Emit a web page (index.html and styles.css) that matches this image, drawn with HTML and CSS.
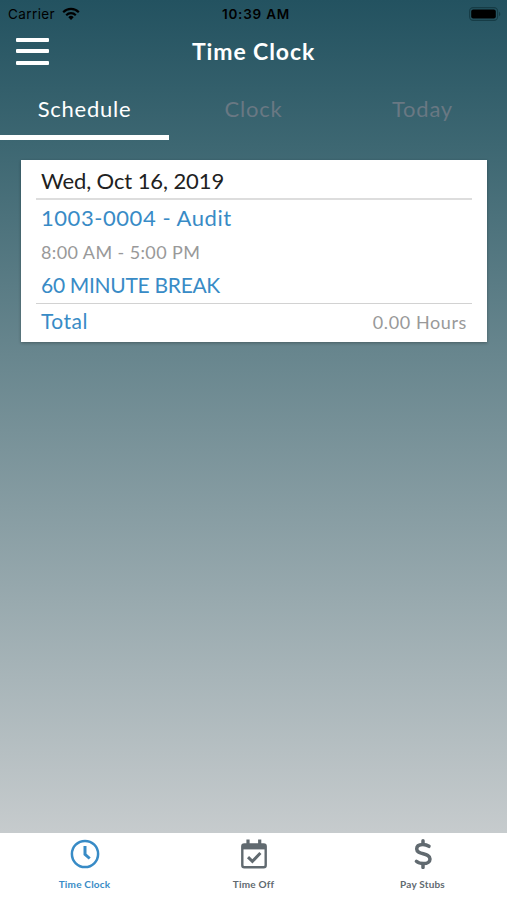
FILE: index.html
```html
<!DOCTYPE html>
<html lang="en">

<head>
    <meta charset="UTF-8">
    <meta name="viewport" content="width=device-width, initial-scale=1.0">
    <title>Time Clock</title>
    <link rel="stylesheet" href="styles.css">
</head>

<body>
    <div class="status-bar">
        <div class="carrier">
            <span>Carrier</span>
            <svg class="wifi" viewBox="0 0 18 13" fill="none" stroke="#000" stroke-width="2.2">
                <path d="M1.2 5.2a11 11 0 0 1 15.6 0" />
                <path d="M4.2 8.2a6.8 6.8 0 0 1 9.6 0" />
                <path d="M6.3 10.2a3.8 3.8 0 0 1 5.4 0L9 13z" fill="#000" stroke="none" />
            </svg>
        </div>
        <span class="time">10:39 AM</span>
        <svg class="battery" viewBox="0 0 32 14">
            <rect x="0.6" y="0.6" width="28" height="12.8" rx="3.6" fill="none" stroke="#163c46" stroke-width="1.1" />
            <rect x="2.2" y="2.4" width="24.6" height="9.2" rx="2" />
            <path d="M30 4.8c1.8.7 1.8 3.7 0 4.4z" fill="#163c46" />
        </svg>
    </div>

    <header class="header">
        <button class="menu" aria-label="Menu">
            <span></span>
            <span></span>
            <span></span>
        </button>
        <h1>Time Clock</h1>
    </header>

    <nav class="tabs">
        <div class="tab active">Schedule</div>
        <div class="tab">Clock</div>
        <div class="tab">Today</div>
    </nav>

    <main>
        <div class="card">
            <div class="card-date">Wed, Oct 16, 2019</div>
            <div class="card-shift">
                <div class="job">1003-0004 - Audit</div>
                <div class="hours">8:00 AM - 5:00 PM</div>
                <div class="break">60 MINUTE BREAK</div>
            </div>
            <div class="card-total">
                <span class="total-label">Total</span>
                <span class="total-hours">0.00 Hours</span>
            </div>
        </div>
    </main>

    <footer class="bottom-nav">
        <div class="nav-item active">
            <svg viewBox="0 0 30 30" fill="none" stroke="currentColor">
                <circle cx="15" cy="15" r="13.1" stroke-width="2.5" />
                <path d="M15 7v8.3l4.7 4.2" stroke-width="3" />
            </svg>
            <span>Time Clock</span>
        </div>
        <div class="nav-item">
            <svg viewBox="0 0 30 30" fill="none" stroke="currentColor">
                <rect x="3.3" y="5.5" width="23.4" height="22.8" rx="2" stroke-width="2.4" />
                <path d="M3.3 7.8h23.4" stroke-width="5.2" />
                <path d="M9 0.4v6M20.7 0.4v6" stroke-width="3.2" />
                <path d="M9 18.2l4.4 4.2 8-8.4" stroke-width="3" />
            </svg>
            <span>Time Off</span>
        </div>
        <div class="nav-item">
            <svg viewBox="0 0 30 30" fill="none" stroke="currentColor" stroke-width="3.5" stroke-linecap="round">
                <path d="M21 7.3c-1.8-1.2-3.8-1.8-6.1-1.8-4 0-6.2 1.7-6.2 4.4 0 6.2 13.3 3.5 13.3 10 0 2.9-2.6 4.7-6.5 4.7-2.8 0-5.3-.7-7.1-2.3" />
                <path d="M15 1.8v3.5M15 25v3.4" />
            </svg>
            <span>Pay Stubs</span>
        </div>
    </footer>
</body>

</html>
```

FILE: styles.css
```css
* {
    box-sizing: border-box;
}

body {
    display: flex;
    flex-direction: column;
    height: 100vh;
    margin: 0;
    font-family: Lato, "Open Sans", sans-serif;
    color: #212121;
    background: linear-gradient(#235260 0, #3d6772 145px, #68868e 355px, #c6cbcd 832px);
    white-space: nowrap;
    overflow: hidden;
}

.status-bar {
    display: grid;
    grid-template-columns: 1fr auto 1fr;
    align-items: center;
    height: 27px;
    padding: 0 6px 0 8px;
    font-family: Inter, "Liberation Sans", sans-serif;
    font-size: 13.5px;
    color: #000;
}

.carrier {
    display: flex;
    align-items: center;
    gap: 7px;
    letter-spacing: 0.4px;
}

.wifi {
    width: 18px;
    height: 13px;
}

.time {
    padding-left: 3px;
    font-weight: 600;
    letter-spacing: 0.8px;
}

.battery {
    justify-self: end;
    width: 32px;
    height: 14px;
}

.header {
    display: grid;
    grid-template-columns: 33px 1fr 33px;
    align-items: center;
    height: 48px;
    padding: 0 16px;
}

.menu {
    display: flex;
    flex-direction: column;
    gap: 7.5px;
    width: 33px;
    padding: 0;
    border: 0;
    background: none;
    cursor: pointer;
}

.menu span {
    height: 4px;
    border-radius: 1px;
    background-color: #fff;
}

h1 {
    margin: 0;
    padding-bottom: 1px;
    font-size: 23px;
    font-weight: 700;
    letter-spacing: 0.9px;
    text-align: center;
    color: #fff;
}

.tabs {
    display: grid;
    grid-template-columns: repeat(3, 1fr);
    height: 65px;
}

.tab {
    display: flex;
    justify-content: center;
    height: 65px;
    padding-top: 20px;
    border-bottom: 5px solid transparent;
    font-size: 22px;
    line-height: 27px;
    letter-spacing: 0.75px;
    color: #697883;
    cursor: pointer;
}

.tab.active {
    color: #fff;
    border-bottom-color: #fff;
}

main {
    flex: 1;
    padding: 20px 20px 0 21px;
}

.card {
    height: 182px;
    padding: 0 15px;
    background-color: #fff;
    box-shadow: 0 1px 3px rgba(0, 0, 0, 0.3);
}

.card-date {
    height: 40px;
    padding: 7px 5px 0;
    border-bottom: 2px solid #ddd;
    font-size: 22px;
    line-height: 28px;
    letter-spacing: -0.1px;
}

.card-shift {
    height: 104px;
    padding: 4px 5px 0;
    border-bottom: 1px solid #d2d2d2;
    color: #388bc6;
}

.job {
    font-size: 22px;
    line-height: 28px;
    letter-spacing: 0.55px;
}

.hours {
    padding-top: 3px;
    font-size: 18px;
    line-height: 34px;
    letter-spacing: 0.4px;
    color: #999;
}

.break {
    padding-top: 2px;
    font-size: 21px;
    line-height: 28px;
    letter-spacing: -0.3px;
}

.card-total {
    display: flex;
    justify-content: space-between;
    align-items: center;
    height: 35px;
    padding: 0 5px;
}

.total-label {
    padding-bottom: 2px;
    font-size: 21px;
    letter-spacing: 0.5px;
    color: #388bc6;
}

.total-hours {
    font-size: 18px;
    letter-spacing: 0.6px;
    color: #999;
}

.bottom-nav {
    display: grid;
    grid-template-columns: repeat(3, 1fr);
    height: 67px;
    background-color: #fff;
}

.nav-item {
    display: flex;
    flex-direction: column;
    align-items: center;
    padding-top: 5.5px;
    font-size: 10px;
    font-weight: 700;
    line-height: 14px;
    letter-spacing: 0.2px;
    color: #616a70;
    cursor: pointer;
}

.nav-item.active {
    color: #388bc6;
}

.nav-item svg {
    width: 30px;
    height: 30px;
    margin-bottom: 8.5px;
}
```
